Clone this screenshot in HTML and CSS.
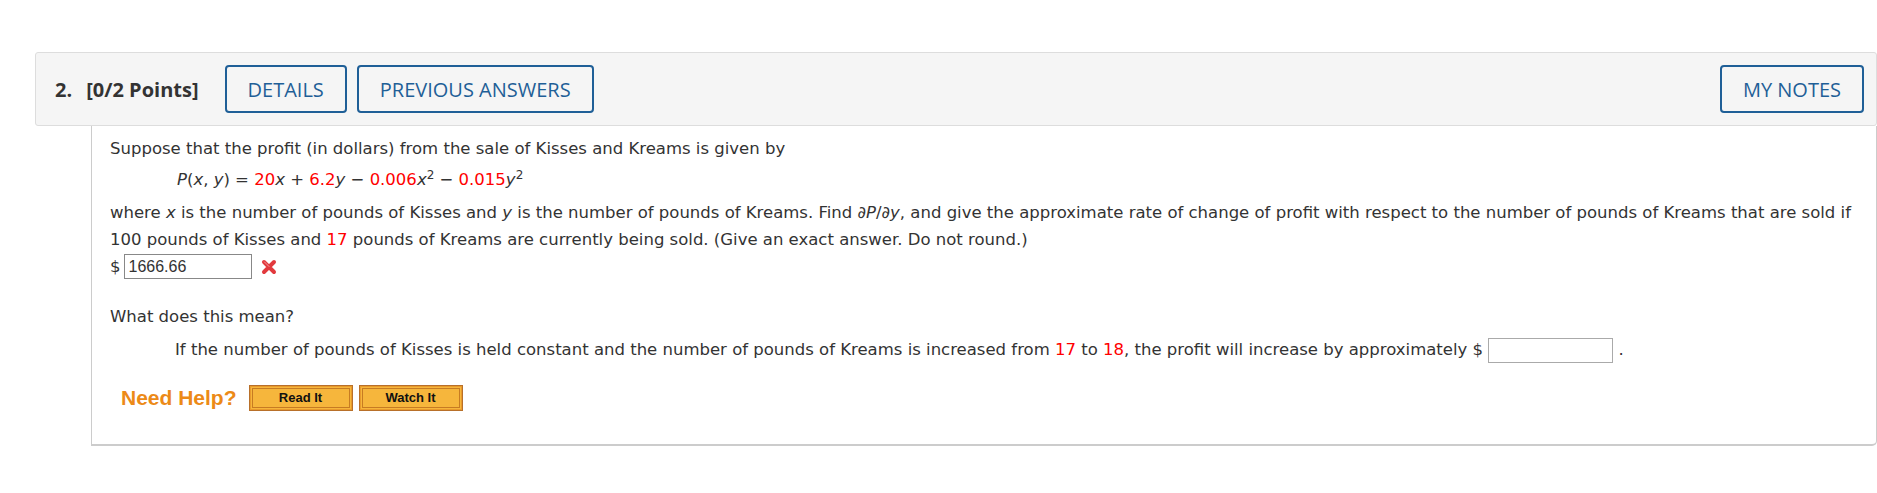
FILE: index.html
```html
<!DOCTYPE html>
<html lang="en">
<head>
    <meta charset="UTF-8">
    <meta name="viewport" content="width=device-width, initial-scale=1.0">
    <title>Question 2</title>
    <link rel="stylesheet" href="styles.css">
</head>
<body>
    <div class="question">
        <div class="q-header">
            <span class="q-title"><span class="q-num">2.</span>[0/2 Points]</span>
            <button class="btn-outline">Details</button>
            <button class="btn-outline">Previous Answers</button>
            <button class="btn-outline notes">My Notes</button>
        </div>

        <div class="q-body">
            <p class="text">Suppose that the profit (in dollars) from the sale of Kisses and Kreams is given by</p>
            <p class="formula"><i>P</i>(<i>x</i>, <i>y</i>) = <span class="rv">20</span><i>x</i> + <span class="rv">6.2</span><i>y</i> &minus; <span class="rv">0.006</span><i>x</i><sup>2</sup> &minus; <span class="rv">0.015</span><i>y</i><sup>2</sup></p>
            <p class="text">where <i>x</i> is the number of pounds of Kisses and <i>y</i> is the number of pounds of Kreams. Find <i>&part;P</i>/<i>&part;y</i>, and give the approximate rate of change of profit with respect to the number of pounds of Kreams that are sold if 100 pounds of Kisses and <span class="rv">17</span> pounds of Kreams are currently being sold. (Give an exact answer. Do not round.)</p>
            <div class="answer-row">
                <span class="dollar">$</span>
                <input type="text" class="answer" value="1666.66">
                <svg class="wrong" width="16" height="16" viewBox="0 0 16 16">
                    <path d="M3 3 L13 13 M13 3 L3 13" stroke="#e2393d" stroke-width="4" stroke-linecap="round"/>
                    <path d="M3.5 3 L8 7.5" stroke="#f59a9c" stroke-width="1" stroke-linecap="round"/>
                </svg>
            </div>

            <p class="text mean">What does this mean?</p>
            <p class="text indent">If the number of pounds of Kisses is held constant and the number of pounds of Kreams is increased from <span class="rv">17</span> to <span class="rv">18</span>, the profit will increase by approximately $ <input type="text" class="answer blank"> .</p>

            <div class="help">
                <span class="help-label">Need Help?</span>
                <button class="btn-help">Read It</button>
                <button class="btn-help">Watch It</button>
            </div>
        </div>
    </div>
</body>
</html>
```

FILE: styles.css
```css
body {
    margin: 0;
    background: white;
    font-family: "DejaVu Sans", Verdana, sans-serif;
    color: #333;
}
.question {
    margin: 52px 0 0 35px;
}
.q-header {
    display: flex;
    align-items: center;
    gap: 10px;
    height: 74px;
    box-sizing: border-box;
    padding: 0 12px 0 19px;
    background-color: #f5f5f5;
    border: 1px solid #ddd;
    border-radius: 3px;
}
.q-title {
    font-family: "Open Sans", sans-serif;
    font-weight: bold;
    font-size: 20px;
    color: #333;
    margin-right: 16px;
}
.q-num {
    margin-right: 14px;
}
.btn-outline {
    font-family: "Open Sans", sans-serif;
    font-size: 20px;
    text-transform: uppercase;
    color: #1f5f97;
    background: transparent;
    border: 2px solid #1f5f97;
    border-radius: 4px;
    height: 48px;
    padding: 0 21px;
    cursor: pointer;
}
.notes {
    margin-left: auto;
}
.q-body {
    margin-left: 56px;
    padding: 9px 12px 33px 18px;
    border: 1px solid #ccc;
    border-top: none;
    border-bottom-width: 2px;
    border-radius: 0 0 5px 0;
    font-size: 16.5px;
    line-height: 27px;
}
.text {
    margin: 0;
}
.formula {
    margin: 4px 0 6px 67px;
}
.formula sup {
    font-size: 12px;
    line-height: 0;
}
.rv {
    color: #f00;
}
.answer-row {
    display: flex;
    align-items: center;
    gap: 3px;
    height: 27px;
}
.answer {
    width: 128px;
    height: 25px;
    box-sizing: border-box;
    border: 1px solid #888;
    padding: 0 4px;
    font-family: "Liberation Sans", Arial, sans-serif;
    font-size: 16px;
    color: #333;
}
.wrong {
    margin-left: 6px;
}
.mean {
    margin-top: 23px;
}
.indent {
    margin-top: 6px;
    padding-left: 65px;
}
.blank {
    width: 125px;
    border-color: #aaa;
    vertical-align: middle;
}
.help {
    display: flex;
    align-items: center;
    gap: 6px;
    margin: 21px 0 0 11px;
}
.help-label {
    font-family: "Liberation Sans", Arial, sans-serif;
    font-weight: bold;
    font-size: 21px;
    color: #ec8a17;
    margin-right: 6px;
}
.btn-help {
    width: 104px;
    height: 26px;
    font-family: "Liberation Sans", Arial, sans-serif;
    font-weight: bold;
    font-size: 13px;
    color: #111;
    background-color: #f6b63c;
    border: 1px solid #b8702a;
    box-shadow: inset 0 0 0 1px #e99a2c, inset 0 0 0 2px #f6b63c, inset 0 0 0 3px #c77b22;
    padding: 0;
    cursor: pointer;
}
```
